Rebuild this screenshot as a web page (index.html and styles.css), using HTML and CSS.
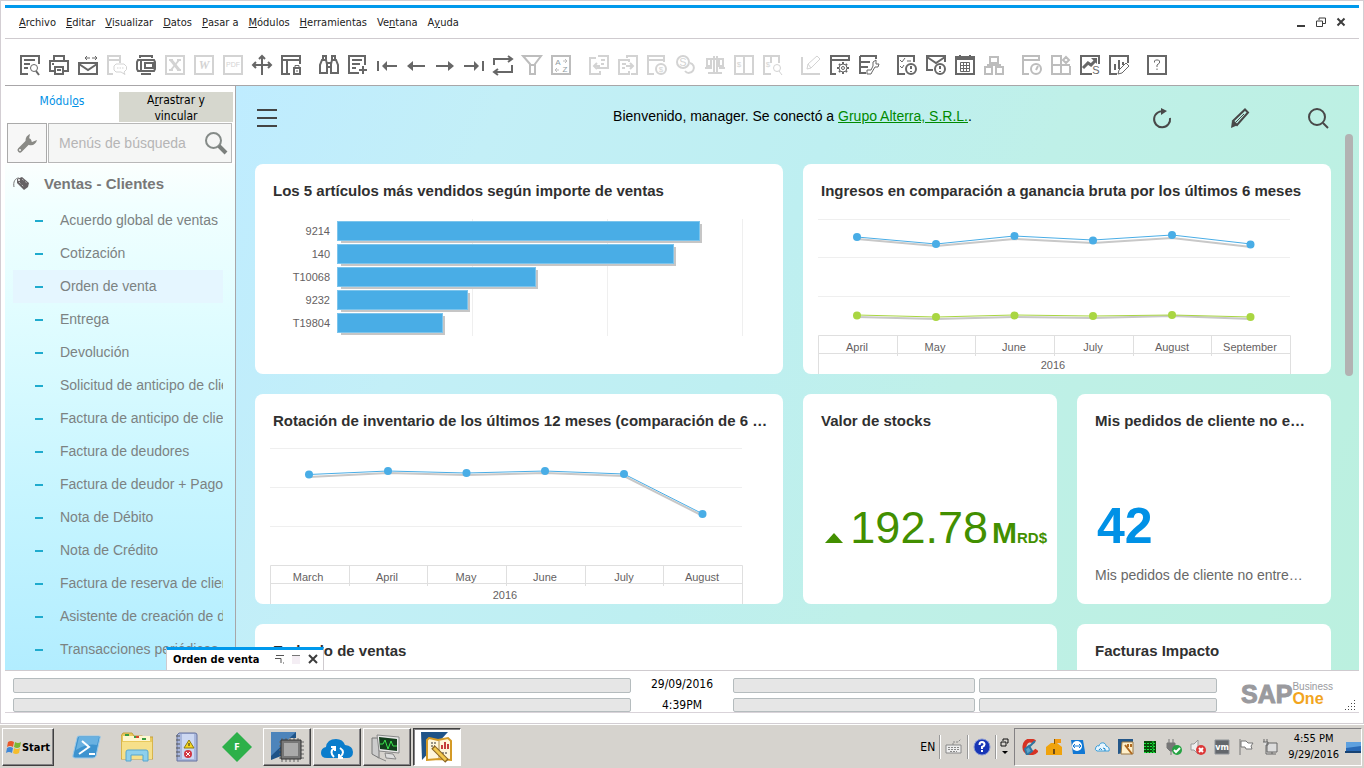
FILE: index.html
```html
<!DOCTYPE html>
<html lang="es">
<head>
<meta charset="utf-8">
<title>SAP Business One</title>
<link rel="stylesheet" href="styles.css">
</head>
<body>
<div class="window">
  <div class="frame">
  <header class="menubar">
    <nav class="menus">
      <button><u>A</u>rchivo</button><button><u>E</u>ditar</button><button><u>V</u>isualizar</button><button><u>D</u>atos</button><button><u>P</u>asar a</button><button><u>M</u>ódulos</button><button><u>H</u>erramientas</button><button>Ve<u>n</u>tana</button><button>A<u>y</u>uda</button>
    </nav>
    <div class="wincontrols">
      <button aria-label="Minimizar"><svg width="10" height="10"><path class="wc" d="M1 9h8"/></svg></button>
      <button aria-label="Restaurar"><svg width="10" height="10"><path class="wc thin" d="M.5 4h6v5.500h-6zM3 3V1h6.500v5.500H7"/></svg></button>
      <button aria-label="Cerrar"><svg width="10" height="10"><path class="wc" d="M1.500 1.500l7 7M8.500 1.500l-7 7"/></svg></button>
    </div>
  </header>

  <div class="toolbar">
    <div class="group">
      <button aria-label="Vista previa"><svg class="ico" viewBox="0 0 20 20"><path d="M8 19H1V1h18v8M4 5h11M4 9h6M4 13h4"/><circle cx="14" cy="13" r="3.500" class="t"/><path d="M16 16l3 4"/></svg></button>
      <button aria-label="Imprimir"><svg class="ico" viewBox="0 0 20 20"><path d="M5 6V1h10v5M5 16H1V6h18v10h-4M6 12h8v7H6zM8 15h4M3 9h2"/></svg></button>
      <button aria-label="Correo"><svg class="ico" viewBox="0 0 20 20"><path d="M1 8h18v11H1zM1 9l9 6 9-6"/><path class="t" d="M7 3h5M14 3h5M9 1L7 3l2 2M17 1l2 2-2 2"/></svg></button>
      <button aria-label="SMS" disabled><svg class="ico" viewBox="0 0 20 20"><path d="M6 19H1V1h12v7M1 5h12"/><path class="t" d="M9 9h8l2.500 2.500v3L17 17l1 2.500-4-2.500H9l-2-2v-4zM10 13h1.500M12.500 13H14M15 13h1.500"/></svg></button>
      <button aria-label="Fax"><svg class="ico" viewBox="0 0 20 20"><path d="M4 3V1h12v2M2 5h16l1 2v7l-1 2H2l-1-2V7zM5 5v11M9 8h8v5H9zM5 19h10"/></svg></button>
      <button aria-label="Excel" disabled><svg class="ico" viewBox="0 0 20 20"><path d="M1 1h18v18H1z"/><path class="x" d="M6 5l8 10"/><path d="M14 5L6 15M4 5h4M12 5h4M4 15h4M12 15h4"/></svg></button>
      <button aria-label="Word" disabled><svg class="ico" viewBox="0 0 20 20"><path d="M1 1h18v18H1z"/><text x="10" y="14" class="serif">W</text></svg></button>
      <button aria-label="PDF" disabled><svg class="ico" viewBox="0 0 20 20"><path d="M1 1h18v18H1z"/><text x="10" y="12" class="pdf">PDF</text></svg></button>
      <button aria-label="Mover"><svg class="ico" viewBox="0 0 20 20"><path d="M10 2v18M2 10h16M7 4l3-3 3 3M4 7l-3 3 3 3M16 7l3 3-3 3"/></svg></button>
      <button aria-label="Bloquear"><svg class="ico" viewBox="0 0 20 20"><path d="M9 19H1V1h18v8M1 5h18M6 5v14"/><path d="M13 13h6v6h-6z"/><path class="t" d="M14 12v-1.500h4V12M16 15v2"/></svg></button>
    </div>
    <div class="group">
      <button aria-label="Buscar"><svg class="ico" viewBox="0 0 20 20"><path d="M4 5V1h3v4M13 5V1h3v4M3 5h4l1 4v9H1v-8zM13 5h4l2 5v8h-7V9zM8 8h4M8 12h4"/></svg></button>
      <button aria-label="Crear"><svg class="ico" viewBox="0 0 20 20"><path d="M11 18H1V1h16v9M4 5h10M4 9h8M4 13h4M15 11v8M11 15h8"/></svg></button>
      <button aria-label="Primero"><svg class="ico" viewBox="0 0 20 20"><path d="M1 6v10M6 11h14"/><path class="f" d="M5 11l5-5v10z"/></svg></button>
      <button aria-label="Anterior"><svg class="ico" viewBox="0 0 20 20"><path d="M3 11h16"/><path class="f" d="M1 11l6-5v10z"/></svg></button>
      <button aria-label="Siguiente"><svg class="ico" viewBox="0 0 20 20"><path d="M1 11h16"/><path class="f" d="M19 11l-6-5v10z"/></svg></button>
      <button aria-label="Último"><svg class="ico" viewBox="0 0 20 20"><path d="M19 6v10M0 11h14"/><path class="f" d="M15 11l-5-5v10z"/></svg></button>
      <button aria-label="Actualizar"><svg class="ico" viewBox="0 0 20 20"><path d="M1 10V4h17M19 10v7H2M15 1l4 3-4 3M5 14l-4 3 4 3"/></svg></button>
      <button aria-label="Filtrar"><svg class="ico mid" viewBox="0 0 20 20"><path d="M1 1h18l-6 8v10H8V9zM8 10h5"/></svg></button>
      <button aria-label="Ordenar"><svg class="ico mid" viewBox="0 0 20 20"><path d="M1 1h18v18H1z"/><path class="t" d="M12 6h4l-2-2M16 6l-2 2M8 15H4l2-2M4 15l2 2"/><text x="7" y="10" class="tiny">A</text><text x="14" y="17" class="tiny">Z</text></svg></button>
    </div>
    <div class="group">
      <button aria-label="Documento base" disabled><svg class="ico" viewBox="0 0 20 20"><path d="M7 3H1v16h10v-3M9 1h10v12H9v-3M12 5h4M12 9h3M5 11h6M8 8l-3 3 3 3"/></svg></button>
      <button aria-label="Documento destino" disabled><svg class="ico" viewBox="0 0 20 20"><path d="M9 3V1h10v18h-6M11 7V5H1v14h10v-3M4 9h4M4 13h3M8 11h7M12 8l3 3-3 3"/></svg></button>
      <button aria-label="Ganancia bruta" disabled><svg class="ico" viewBox="0 0 20 20"><path d="M7 19H1V1h16v6M1 5h16"/><circle cx="14" cy="14" r="5"/><text x="14" y="17" class="tiny">$</text></svg></button>
      <button aria-label="Medios de pago" disabled><svg class="ico" viewBox="0 0 20 20"><circle cx="7" cy="7" r="6"/><path d="M14 8a5 5 0 1 1-5 8"/><text x="7" y="11" class="small">S</text></svg></button>
      <button aria-label="Balance" disabled><svg class="ico" viewBox="0 0 20 20"><path d="M1 4h18M9 1v17M12 1v17M2 5v6h4V5M14 5v6h4V5M0 13h7M14 13h6M3 18h14"/></svg></button>
      <button aria-label="Asiento" disabled><svg class="ico" viewBox="0 0 20 20"><path d="M1 1h18v18H1zM10 1v18"/><text x="5" y="12" class="tiny">$</text></svg></button>
      <button aria-label="Detalle" disabled><svg class="ico" viewBox="0 0 20 20"><path d="M8 19H1V1h15v7M8 1v7"/><text x="5" y="12" class="tiny">$</text><circle class="t" cx="14" cy="13" r="3.500"/><path class="t" d="M16 16l3 4"/></svg></button>
    </div>
    <div class="group">
      <button aria-label="Diseño" disabled><svg class="ico" viewBox="0 0 20 20"><path d="M1 2v17h18"/><path class="t" d="M6 14l1-5 9-8 3 3-9 9zM7 9l3 4"/></svg></button>
      <button aria-label="Parametrizaciones"><svg class="ico" viewBox="0 0 20 20"><path d="M6 19H1V1h18v5M1 5h18"/><circle class="t" cx="13" cy="13" r="4"/><circle class="t" cx="13" cy="13" r="1.500"/><path d="M13 7v2M13 17v2M7 13h2M17 13h2M9 9l1 1M16 16l1 1M9 17l1-1M16 10l1-1"/></svg></button>
      <button aria-label="Herramientas"><svg class="ico" viewBox="0 0 20 20"><path d="M1 1h16v3M1 1v17h6M1 7h10M1 12h8"/><path class="t" d="M8 19v-4h4l2-4V7l3-2v4h3l-1 3h-3l-3 5-1 2z"/></svg></button>
    </div>
    <div class="group">
      <button aria-label="Actividades"><svg class="ico" viewBox="0 0 20 20"><path d="M8 19H1V1h16v6"/><path class="t" d="M3 5l2 2 3-4M3 11l2 2 2-3M10 6h4"/><circle cx="14" cy="14" r="5"/><path d="M14 11v3M14 16v1"/></svg></button>
      <button aria-label="Mensajes"><svg class="ico" viewBox="0 0 20 20"><path d="M7 15H1V1h18v6M1 2l9 6 9-6"/><circle cx="14" cy="14" r="5"/><path d="M14 11v3M14 16v1"/></svg></button>
      <button aria-label="Calendario"><svg class="ico" viewBox="0 0 20 20"><path d="M1 2h18v17H1zM1 4h18M5 0v4M15 0v4"/><path class="t" d="M5.500 7.500h9v9h-9zM8.500 8v8M11.500 8v8M5 10.500h10M5 13.500h10"/></svg></button>
      <button aria-label="Relaciones"><svg class="ico mid" viewBox="0 0 20 20"><path d="M6 2h8v6H6zM1 12h7v7H1zM12 12h7v7h-7zM10 8v3M4 12v-2h12v2"/></svg></button>
    </div>
    <div class="group">
      <button aria-label="Panel"><svg class="ico mid" viewBox="0 0 20 20"><path d="M7 19H1V1h16v5M1 5h16"/><circle cx="14" cy="14" r="5"/><path d="M14 15l2-4"/></svg></button>
      <button aria-label="Widgets"><svg class="ico mid" viewBox="0 0 20 20"><path d="M11 1H1v18h18v-8M10 1v18M1 10h18M15 2l3 3-3 3-3-3z"/></svg></button>
      <button aria-label="Ventas"><svg class="ico" viewBox="0 0 20 20"><path d="M12 19H1V1h18v8"/><path class="x" d="M3 13l5-5 3 2 4-4"/><path class="f" d="M11 3h6v6z"/><text x="16" y="19" class="small">S</text></svg></button>
      <button aria-label="Informes"><svg class="ico" viewBox="0 0 20 20"><path d="M8 19H1V1h18v7M6 9v6M10 5v9M14 7v3"/><path class="t" d="M9 19l1-4 7-7 3 3-7 7z"/></svg></button>
    </div>
    <div class="group">
      <button aria-label="Ayuda"><svg class="ico" viewBox="0 0 20 20"><path d="M1 1h18v18H1z"/><path class="t" d="M7.500 7.500V6l1-1h3l1 1v2L10 10v2M10 13.500V15"/></svg></button>
    </div>
  </div>

  <div class="workspace">
    <aside class="sidebar">
      <div class="tabs"><button class="tab on">Módul<u>o</u>s</button><button class="tab">A<u>r</u>rastrar y vincular</button></div>
      <div class="searchrow">
        <button class="wrench" aria-label="Configurar"><svg width="24" height="24"><path d="M5 19L14 10" stroke="#8a8a86" stroke-width="5" stroke-linecap="round"/><path d="M11 11c-1-3 0-6 4-8l-1 5 3 3 5-2c-1 4-4 6-8 5z" fill="#8a8a86"/><circle cx="5" cy="19" r="1" fill="#f7f7f7"/></svg></button>
        <label class="search"><input type="text" placeholder="Menús de búsqueda" aria-label="Menús de búsqueda"><svg width="24" height="24"><circle cx="9.500" cy="9.500" r="7.500" fill="none" stroke="#858b88" stroke-width="2"/><path d="M15 15l7 7" stroke="#7b7f7c" stroke-width="4"/></svg></label>
      </div>
      <div class="tree">
        <h2><svg width="16" height="16"><path d="M1 12c-1-5 1-9 5-9" stroke="#777" fill="none"/><path d="M4 4l5-2 7 6-1 4-4 3-7-7z" fill="#666264"/><path d="M6 7l5 5M9 4l5 4" stroke="#b9b9b9" stroke-dasharray="2 2"/><circle cx="6" cy="5" r="1" fill="#fff"/></svg>Ventas - Clientes</h2>
        <ul>
          <li><a href="#">Acuerdo global de ventas</a></li>
          <li><a href="#">Cotización</a></li>
          <li class="active"><a href="#">Orden de venta</a></li>
          <li><a href="#">Entrega</a></li>
          <li><a href="#">Devolución</a></li>
          <li><a href="#">Solicitud de anticipo de clientes</a></li>
          <li><a href="#">Factura de anticipo de clientes</a></li>
          <li><a href="#">Factura de deudores</a></li>
          <li><a href="#">Factura de deudor + Pago</a></li>
          <li><a href="#">Nota de Débito</a></li>
          <li><a href="#">Nota de Crédito</a></li>
          <li><a href="#">Factura de reserva de clientes</a></li>
          <li><a href="#">Asistente de creación de documentos</a></li>
          <li><a href="#">Transacciones periódicas</a></li>
        </ul>
      </div>
    </aside>

    <main class="cockpit">
      <div class="cockhead">
        <button aria-label="Menú"><svg width="22" height="20"><path d="M1 2h20M1 10h20M1 18h20" stroke="#444" stroke-width="2"/></svg></button>
        <p>Bienvenido, manager. Se conectó a <a href="#">Grupo Alterra, S.R.L.</a>.</p>
        <div class="tools">
          <button aria-label="Actualizar"><svg width="22" height="22"><path d="M13 4.500A8 8 0 1 0 19 11" fill="none" stroke="#484848" stroke-width="2"/><path d="M10 1l6 3-6 4z" fill="#484848"/></svg></button>
          <button aria-label="Editar"><svg width="22" height="22"><path d="M4 14L16 2.500l3 3L8 18z" fill="none" stroke="#484848" stroke-width="2"/><path d="M7 15l8-8" stroke="#484848"/><path d="M2 21l1-7 6 4z" fill="#484848"/></svg></button>
          <button aria-label="Buscar"><svg width="22" height="22"><circle cx="10" cy="10" r="8" fill="none" stroke="#484848" stroke-width="2"/><path d="M16 16l5 5" stroke="#484848" stroke-width="2"/></svg></button>
        </div>
      </div>
      <div class="cards">
        <section class="card wide">
          <h3>Los 5 artículos más vendidos según importe de ventas</h3>
          <svg class="chart" viewBox="0 0 528 164">
            <path class="grid" d="M217.500 9v117M352.500 9v117M487.500 9v117"/>
            <g class="shade"><rect x="86" y="14" width="361" height="19"/><rect x="86" y="37" width="335" height="19"/><rect x="86" y="60" width="197" height="19"/><rect x="86" y="83" width="129" height="19"/><rect x="86" y="106" width="104" height="19"/></g>
            <g class="bar"><rect x="82.500" y="11.500" width="362" height="19"/><rect x="82.500" y="34.500" width="336" height="19"/><rect x="82.500" y="57.500" width="198" height="19"/><rect x="82.500" y="80.500" width="130" height="19"/><rect x="82.500" y="103.500" width="105" height="19"/></g>
            <g class="end"><text x="75" y="25">9214</text><text x="75" y="48">140</text><text x="75" y="71">T10068</text><text x="75" y="94">9232</text><text x="75" y="117">T19804</text></g>
          </svg>
        </section>
        <section class="card wide">
          <h3>Ingresos en comparación a ganancia bruta por los últimos 6 meses</h3>
          <svg class="chart" viewBox="0 0 528 164">
            <path class="grid" d="M15 9.500h472M15 47.500h472M15 86.500h472"/>
            <path class="axis" d="M15.500 164V125.500h472V164M15.500 143.500h472M94.500 125v21M172.500 125v21M251.500 125v21M330.500 125v21M408.500 125v21"/>
            <path class="lshade" d="M54 29l79 7 78-7 79 4 79-5 79 9M54 107l79 2 78-2 79 1 79-2 79 3"/>
            <path class="lblue" d="M54 27l79 7 78-8 79 4 79-5 79 9"/><path class="lgreen" d="M54 105l79 2 78-2 79 1 79-1 79 2"/>
            <g class="dblue"><circle cx="54" cy="27" r="4"/><circle cx="133" cy="34" r="4"/><circle cx="211.500" cy="26" r="4"/><circle cx="290" cy="30.500" r="4"/><circle cx="369" cy="25" r="4"/><circle cx="447.500" cy="34.500" r="4"/></g>
            <g class="dgreen"><circle cx="54" cy="105.500" r="4"/><circle cx="133" cy="107" r="4"/><circle cx="211.500" cy="105.500" r="4"/><circle cx="290" cy="106" r="4"/><circle cx="369" cy="105" r="4"/><circle cx="447.500" cy="107" r="4"/></g>
            <g class="center"><text x="54" y="141">April</text><text x="132" y="141">May</text><text x="211" y="141">June</text><text x="290" y="141">July</text><text x="369" y="141">August</text><text x="447" y="141">September</text><text x="250" y="159">2016</text></g>
          </svg>
        </section>
        <section class="card wide">
          <h3>Rotación de inventario de los últimos 12 meses (comparación de 6 …</h3>
          <svg class="chart" viewBox="0 0 528 164">
            <path class="grid" d="M15 8.500h472M15 47.500h472M15 86.500h472"/>
            <path class="axis" d="M15.500 164V125.500h472V164M15.500 143.500h472M94.500 125v21M172.500 125v21M251.500 125v21M330.500 125v21M408.500 125v21"/>
            <path class="lshade" d="M54 37l79-4 78 2 79-2 79 3 79 40"/>
            <path class="lblue" d="M54 34.500l79-3.500 78 2 79-2 79 3 79 40"/>
            <g class="dblue"><circle cx="54" cy="34.500" r="4"/><circle cx="133" cy="31" r="4"/><circle cx="211.500" cy="33" r="4"/><circle cx="290" cy="31" r="4"/><circle cx="369" cy="34" r="4"/><circle cx="447.500" cy="74" r="4"/></g>
            <g class="center"><text x="53" y="141">March</text><text x="132" y="141">April</text><text x="211" y="141">May</text><text x="290" y="141">June</text><text x="369" y="141">July</text><text x="447" y="141">August</text><text x="250" y="159">2016</text></g>
          </svg>
        </section>
        <section class="card">
          <h3>Valor de stocks</h3>
          <div class="kpi"><svg width="18" height="10"><path d="M0 10L9 0l9 10z" fill="#428f00"/></svg><span class="num">192.78</span><span class="unit">M</span><span class="cur">RD$</span></div>
        </section>
        <section class="card">
          <h3>Mis pedidos de cliente no e…</h3>
          <div class="count">42</div>
          <p class="note">Mis pedidos de cliente no entre…</p>
        </section>
        <section class="card three"><h3>Embudo de ventas</h3></section>
        <section class="card"><h3>Facturas Impacto</h3></section>
      </div>
      <div class="scroll"></div>
    </main>
    <div class="mini"><strong>Orden de venta</strong>
      <button aria-label="Restaurar"><svg width="10" height="10"><path d="M2 1.500h8M1 4.500h6V9M9 9h1" fill="none" stroke="#555"/></svg></button>
      <button aria-label="Maximizar"><svg width="10" height="10"><path fill="#f4eef4" d="M1 2h8v8H1z"/><path d="M1 1.500h8" stroke="#777"/></svg></button>
      <button aria-label="Cerrar"><svg width="10" height="10"><path class="wc" d="M1 1l8 8M9 1L1 9"/></svg></button>
    </div>
  </div>

  <footer class="status">
    <div class="col grow"><span class="field"></span><span class="field"></span></div>
    <div class="col date"><span>29/09/2016</span><span>4:39PM</span></div>
    <div class="col mid1"><span class="field"></span><span class="field"></span></div>
    <div class="col mid2"><span class="field"></span><span class="field"></span></div>
    <div class="brand"><b>SAP</b><span class="bo"><span>Business</span><strong>One</strong></span></div>
    <svg class="grip" width="12" height="12"><path d="M10.500 0v12M7.500 3v9M4.500 6v6M1.500 9v3" stroke="#444" stroke-dasharray="1 2"/></svg>
  </footer>
  </div>
</div>

<div class="taskbar">
  <button class="start"><svg width="16" height="16"><path d="M2 3q3-2 6 0L7 8Q4 6 1 8z" fill="#e8582a"/><path d="M9 3q3 2 6 0l-1 5q-3 2-6 0z" fill="#7bb733"/><path d="M1 9q3-2 6 0l-1 5q-3-2-6 0z" fill="#3f87d6"/><path d="M8 9q3 2 6 0l-1 5q-3 2-6 0z" fill="#f5bd2c"/></svg>Start</button>
  <div class="quick">
    <button aria-label="PowerShell"><svg width="32" height="32"><path d="M8 5h20q2 0 1 2l-4 18q-1 2-3 2H4q-3 0-2-3L6 7q0-2 2-2z" fill="#3d93cf" stroke="#9cc9e8"/><path d="M8 6h20l-2 8q-9-2-21 5z" fill="#7cbde8" opacity=".7"/><path d="M11 10l7 6-10 7M18 23h6" fill="none" stroke="#fff" stroke-width="2"/></svg></button>
    <button aria-label="Explorador"><svg width="32" height="32"><path d="M0 5l2-3h9l2 3h8l2 1h9v22H0z" fill="#e9c95c" stroke="#c6a13c"/><path d="M2 5h27v5H2z" fill="#fff6cf"/><path d="M4 4h4M13 6h4M21 8h4" stroke="#3a9b42" stroke-width="2"/><path d="M15 6h3" stroke="#d6452c" stroke-width="2"/><path d="M1 11h30v17H1z" fill="#f6e08a"/><path d="M5 30V21q0-2 2-2h18q2 0 2 2v9h-5v-6H10v6z" fill="#8ed0ec" stroke="#57a6cf"/></svg></button>
    <button aria-label="Visor"><svg width="32" height="32"><path d="M8 2h16q2 0 2 2v26H6V4z" fill="#a9b7dd" stroke="#66739f"/><path d="M11 3h12v25H11z" fill="#cdd8f2"/><path d="M5 5h4M5 9h4M5 13h4M5 17h4M5 21h4M5 25h4" stroke="#555"/><path d="M18 9l5 8H13z" fill="#f8d71e" stroke="#8c7b12"/><path d="M18 12v3" stroke="#222"/><circle cx="17" cy="23" r="4" fill="#d23643"/><path d="M15 21l4 4M19 21l-4 4" stroke="#fff"/></svg></button>
    <button aria-label="F"><svg width="32" height="32"><path d="M16 1l15 15-15 15L1 16z" fill="#2db04a"/><text x="16" y="19" class="ftext">F</text></svg></button>
  </div>
  <div class="tasks">
    <button aria-label="Servidor"><svg width="36" height="34"><path d="M2 2h25v6H12v18L2 30z" fill="#1f5387"/><path d="M2 2h25L2 26z" fill="#4d84bb"/><path d="M13 8v24M17 8v24M21 8v24M25 8v24M29 8v24M10 12h25M10 16h25M10 20h25M10 24h25M10 28h25" stroke="#666"/><path d="M12 10h20v19H12z" fill="#777" stroke="#333"/><path d="M15 13h14v13H15z" fill="#aaa"/></svg></button>
    <button aria-label="Nube"><svg width="36" height="34"><path d="M8 28Q2 28 2 23q0-5 5-6 1-8 10-8 7 0 9 6 8 1 8 7 0 6-6 6z" fill="#0a7dcc"/><path d="M15 27q-5-5 0-9M12 17h4v4M21 18q6 4 0 9M24 28h-4v-4" fill="none" stroke="#fff" stroke-width="2"/></svg></button>
    <button aria-label="Monitor"><svg width="36" height="34"><path d="M3 8h7v20l-7-4z" fill="#ccc" stroke="#777"/><path d="M8 5l22 2v16L10 21z" fill="#e8e8e8" stroke="#888"/><path d="M10 7l18 2v12l-17-2z" fill="#113d1b"/><path d="M11 14h3l2-4 3 9 3-8 2 5h4" fill="none" stroke="#39e34b"/><path d="M16 23l8 1 3 5-10-1zM8 27l9 4" fill="#ddd" stroke="#888"/></svg></button>
    <button class="pressed" aria-label="SAP Business One"><svg width="36" height="34"><path d="M2 2h27L3 30z" fill="#1f5387"/><path d="M10 8l9 2 10-2 3 3v19l-12-1-12 1V10z" fill="#fff6db" stroke="#d49a26" stroke-width="2"/><path d="M20 11v17" stroke="#ad8c4b"/><path d="M23 19v-4M26 19v-7M29 19v-5" stroke="#c53d3d" stroke-width="2"/><path d="M12 13h5M12 16h4M23 23h6" stroke="#333" stroke-dasharray="2 1"/><path d="M14 17l14 14" stroke="#8a6420" stroke-width="5"/><path d="M15 18l12 12" stroke="#f2c84e" stroke-width="3"/></svg></button>
  </div>
  <div class="lang"><span>EN</span>
    <span class="cell"><svg width="18" height="18"><path d="M1 7h15v8H1z" fill="#eee" stroke="#888"/><path d="M3 9.500h11M3 11.500h11M5 13.500h7M8 7V4h5l3-3" stroke="#888" fill="none" stroke-dasharray="2 1"/></svg></span>
    <span class="cell"><svg width="18" height="18"><circle cx="9" cy="9" r="8" fill="#1735b5" stroke="#8798d5"/><path d="M6.500 7q0-3 2.500-3t2.500 2.500Q11.500 8 9 9v2M9 12v2" fill="none" stroke="#fff" stroke-width="2"/></svg></span>
    <span class="cell last"><svg width="10" height="18"><path d="M1 4h5v4H1zM3 3V1h5v4H7" fill="none" stroke="#111"/><path d="M2 13h6l-3 3z"/></svg></span>
  </div>
  <div class="tray">
    <svg width="16" height="16"><path d="M13 3Q6-1 3 5q-2 7 4 9 5 1 8-3" fill="none" stroke="#d63324" stroke-width="4"/><path d="M13 2L7 8M3 10l4-3 3 5-5 4z" stroke="#2f77a3" stroke-width="2" fill="#58a4cc"/></svg>
    <svg width="16" height="16"><path d="M0 8l5-4h6l5 4v8H0z" fill="#f0a30c"/><path d="M8.500 0v5" stroke="#8a5a00"/><path d="M9 0h6v4H9z" fill="#f39b13"/><path d="M7 10h2v5H7z" fill="#6d4b16"/></svg>
    <svg width="16" height="16"><path d="M1 1h12l2 12v2H3z" fill="#1178d4"/><circle cx="7" cy="7" r="5" fill="#fff"/><path d="M4 7h6M5 5L3 7l2 2M9 5l2 2-2 2" fill="none" stroke="#1178d4"/></svg>
    <svg width="16" height="16"><path d="M3 12q-3-1-1-4 1-2 3-1 1-4 5-3 2 1 2 3 4 1 3 5z" fill="#e6f5ff" stroke="#3a9ed9"/><path d="M5 11q1-3 3 0M9 9q3 0 2 3" fill="none" stroke="#1584cb"/></svg>
    <svg width="16" height="16"><path d="M0 0h15v12L0 15z" fill="#245789"/><path d="M4 3h11v12H3z" fill="#fff0ca" stroke="#9b7943"/><path d="M7 6l7 9M10 5v3M13 5v3" stroke="#b06920" stroke-width="2"/></svg>
    <svg width="16" height="16"><path d="M2 2h12v12H2z" fill="#084b08"/><path d="M2 4.500h12M2 7.500h12M2 10.500h12M2 13.500h12M11 2v12" stroke="#18e33f" stroke-dasharray="2 1"/></svg>
    <svg width="16" height="16"><path d="M3 0v4M7 0v4M1 4h8v5l-3 3H4L1 9zM5 12v4" fill="#777" stroke="#777"/><circle cx="11" cy="11" r="5" fill="#26a343"/><path d="M8 11l2 2 4-4" stroke="#fff" stroke-width="2" fill="none"/></svg>
    <svg width="16" height="16"><path d="M1 5h3l4-4v14l-4-4H1z" fill="#eee" stroke="#999"/><circle cx="11" cy="11" r="5" fill="#dc3838"/><path d="M9 9l4 4M13 9l-4 4" stroke="#fff" stroke-width="2"/></svg>
    <svg width="16" height="16"><path d="M1 1h14v14H1z" fill="#63676c" stroke="#909499"/><text x="8" y="11" class="vm">vm</text></svg>
    <svg width="16" height="16"><path d="M2 0v16M3 2h5l2 2h5l-2 3 1 3H8L7 8H3z" fill="#fff" stroke="#777"/></svg>
    <svg width="16" height="16"><path d="M5 4h10v9H5zM7 15h7M10 13v2M2 0v3M5 0v3M1 3h5v3H4v9h3" fill="#ddd" stroke="#666"/></svg>
    <div class="clock"><span>4:55 PM</span><span>9/29/2016</span></div>
    <svg class="desk" width="16" height="16"><path d="M1 3h15v10H1z" fill="#2869b6"/><path d="M1 3h15v4L1 9z" fill="#5da0df"/><path d="M0 13h16" stroke="#174273" stroke-width="2"/></svg>
  </div>
</div>
</body>
</html>
```
FILE: styles.css
```css
* { box-sizing: border-box; }
body {
  margin: 0;
  height: 100vh;
  display: flex;
  flex-direction: column;
  overflow: hidden;
  font-family: "Liberation Sans", Arial, sans-serif;
  font-size: 14px;
  color: #000;
  background: #d6d3ce;
}
button { margin: 0; padding: 0; border: 0; background: none; font: inherit; color: inherit; display: flex; align-items: center; justify-content: center; }
svg { display: block; flex: none; }
h2, h3, p, ul { margin: 0; padding: 0; }
ul { list-style: none; }

.window { flex: 1; min-height: 0; display: flex; border: 1px solid #d3ced3; background: #fff; padding: 4px 4px 10px; }
.frame { flex: 1; min-width: 0; display: flex; flex-direction: column; border-top: 3px solid #0099ec; }

.menubar { height: 31px; flex: none; display: flex; align-items: center; justify-content: space-between; padding: 0 13px 2px 14px; border-bottom: 1px solid #cfcbcf; font-family: "DejaVu Sans Condensed", "DejaVu Sans", sans-serif; font-size: 11px; color: #222; }
.menus { display: flex; gap: 10px; }
.wincontrols { display: flex; gap: 10px; }
.wc { stroke: #3c3c3c; stroke-width: 2; fill: none; }
.wc.thin { stroke-width: 1; }

.toolbar { height: 47px; flex: none; display: flex; gap: 18px; padding: 6px 15px 0; align-items: center; border-bottom: 1px solid #a8a6a8; }
.group { display: flex; gap: 9px; }
.ico { width: 20px; height: 20px; fill: none; stroke: #676767; stroke-width: 2; color: #676767; overflow: visible; }
.toolbar button:disabled .ico { stroke: #d3d3d3; color: #d3d3d3; }
.ico.mid { stroke: #bdbdbd; color: #8f9b9f; }
.ico .t { stroke-width: 1; }
.ico .x { stroke-width: 3; }
.ico .f { fill: currentColor; stroke: none; }
.ico text { fill: currentColor; stroke: none; text-anchor: middle; }
.tiny { font-size: 8px; }
.pdf { font-size: 7px; }
.small { font-size: 11px; }
.serif { font: italic bold 12px "Liberation Serif", serif; }

.workspace { flex: 1; min-height: 0; display: flex; position: relative; border-bottom: 1px solid #cfcbcf; }
.sidebar { width: 231px; flex: none; display: flex; flex-direction: column; border-right: 1px solid #a8a6a8; overflow: hidden; }
.tabs { height: 37px; flex: none; display: flex; align-items: flex-start; padding: 6px 2px 0 0; font-family: "DejaVu Sans Condensed", "DejaVu Sans", sans-serif; font-size: 12px; line-height: 16px; }
.tab { flex: 1; display: block; height: 30px; padding: 0 20px; background: #d6d7ce; }
.tab.on { height: auto; padding-top: 1px; background: none; color: #0091e6; }
.searchrow { display: flex; gap: 1px; height: 41px; flex: none; padding: 0 3px 1px 2px; }
.wrench { width: 40px; flex: none; border: 1px solid #aaa; background: #f7f7f7; }
.search { flex: 1; min-width: 0; display: flex; align-items: center; border: 1px solid #b8b8b8; background: #f5f6f5; padding: 0 3px 0 9px; }
.search input { flex: 1; width: 0; border: 0; outline: 0; padding: 0 1px; background: none; font: 14px "Liberation Sans", Arial, sans-serif; }
.search input::placeholder { color: #b5b5b5; }
.tree { flex: 1; min-height: 0; padding: 0 12px 0 8px; background: linear-gradient(#fbfffe 0, #f1ffff 8%, #e2fdff 28%, #c7f5ff 65%, #b2edff); color: #787878; overflow: hidden; }
.tree h2 { display: flex; align-items: center; gap: 15px; height: 40px; padding: 0 0 2px; font-size: 15px; }
.tree li { height: 33px; line-height: 33px; padding-left: 22px; font-size: 14px; }
.tree li.active { background: #e5f6ff; }
.tree a { display: flex; gap: 17px; align-items: center; color: #7c8282; text-decoration: none; white-space: nowrap; overflow: hidden; }
.tree a::before { content: ""; width: 8px; height: 2px; flex: none; background: #1fabce; }

.cockpit { flex: 1; min-width: 0; position: relative; overflow: hidden; background: linear-gradient(112deg, #bfecff 0, #c3eff7 20%, #beeff1 45%, #bff0e8 62%, #bbf0df); }
.cockhead { display: grid; grid-template-columns: 1fr auto 1fr; align-items: center; height: 78px; padding: 0 30px 14px 20px; }
.cockhead p { line-height: 20px; padding-bottom: 4px; }
.cockhead p a { color: #008a00; }
.cockhead button { justify-self: start; }
.tools { display: flex; gap: 56px; justify-self: end; }
.cards { display: grid; grid-template-columns: repeat(4, 1fr); grid-auto-rows: 210px; gap: 20px; padding: 0 28px 0 19px; }
.card { min-width: 0; background: #fff; border-radius: 8px; overflow: hidden; display: flex; flex-direction: column; }
.wide { grid-column: span 2; }
.three { grid-column: span 3; }
.card h3 { height: 46px; flex: none; padding: 17px 8px 0 18px; font-size: 15px; line-height: 20px; color: #303030; white-space: nowrap; overflow: hidden; }
.chart { width: 100%; font-size: 11px; fill: #655f62; }
.chart .grid { stroke: #efefef; }
.chart .axis { stroke: #dfdfdf; fill: none; }
.shade { fill: #c6c6c6; }
.bar { fill: #49ade6; stroke: #7cc4ec; }
.end { text-anchor: end; }
.center { text-anchor: middle; }
.lshade { fill: none; stroke: #c8c8c8; stroke-width: 2; }
.lblue { fill: none; stroke: #49ade6; stroke-width: 1; }
.lgreen { fill: none; stroke: #a9d642; stroke-width: 1; }
.dblue { fill: #49ade6; }
.dgreen { fill: #a9d642; }
.kpi { display: flex; align-items: baseline; justify-content: flex-end; color: #428f00; padding: 60px 10px 0 0; line-height: 56px; }
.num { font-size: 45px; margin: 0 4px 0 7px; }
.unit { font-size: 30px; font-weight: bold; }
.cur { font-size: 15px; font-weight: bold; }
.count { font-size: 50px; font-weight: bold; color: #0091e6; line-height: 56px; padding: 58px 20px 0; }
.note { padding: 11px 18px 0; line-height: 20px; color: #686868; white-space: nowrap; }
.scroll { position: absolute; right: 6px; top: 48px; width: 8px; height: 242px; border-radius: 4px; background: #b2b2b2; }

.mini { position: absolute; left: 161px; bottom: 0; width: 158px; height: 23px; display: flex; align-items: center; gap: 7px; padding: 0 5px 2px 6px; background: #fff; border: 1px solid #cfcbcf; border-bottom: 0; border-top: 3px solid #0099ec; font-family: "DejaVu Sans Condensed", "DejaVu Sans", sans-serif; font-size: 11px; }
.mini strong { flex: 1; white-space: nowrap; }

.status { position: relative; height: 42px; flex: none; display: flex; padding: 0 8px; border-bottom: 1px solid #d9d3d9; }
.col { display: flex; flex-direction: column; gap: 5px; padding-top: 7px; }
.field { height: 15px; border: 1px solid #b5bcbe; border-radius: 2px; background: #e6e6e6; }
.grow { flex: 1; }
.date { width: 102px; gap: 5px; padding-top: 5px; line-height: 16px; text-align: center; font-family: "DejaVu Sans Condensed", "DejaVu Sans", sans-serif; font-size: 12px; }
.mid1 { width: 242px; margin-right: 4px; }
.mid2 { width: 238px; }
.brand { width: 134px; display: flex; align-items: center; padding: 4px 0 0 24px; color: #9a9a9e; }
.brand b { font-size: 25px; line-height: 24px; -webkit-text-stroke: 1px #9a9a9e; }
.bo { display: flex; flex-direction: column; font-size: 10px; line-height: 10px; }
.bo strong { font-size: 16px; line-height: 14px; color: #f2a51e; }
.grip { position: absolute; right: 3px; bottom: 0; }

.taskbar { height: 44px; flex: none; display: flex; align-items: center; background: #d6d3ce; border-top: 1px solid #fff; padding: 1px 2px 0; font-family: "DejaVu Sans Condensed", "DejaVu Sans", sans-serif; font-size: 12px; }
.start, .tasks button { height: 38px; border: 1px solid; border-color: #fff #404040 #404040 #fff; box-shadow: inset -1px -1px #848284; }
.start { width: 52px; gap: 0; font-size: 11px; font-weight: bold; }
.quick { display: flex; gap: 18px; margin-left: 17px; }
.tasks { display: flex; gap: 2px; margin-left: 10px; flex: 1; }
.tasks button { width: 48px; }
.tasks .pressed { background: #fff; border-color: #404040 #fff #fff #404040; box-shadow: inset 1px 1px #848284; }
.ftext { fill: #fff; font-size: 9px; font-weight: bold; text-anchor: middle; }
.lang { display: flex; align-items: center; font-size: 12px; }
.cell { display: flex; align-items: center; height: 24px; margin-left: 4px; padding-left: 5px; border-left: 1px solid #999; box-shadow: inset 1px 0 #fff; }
.cell.last { padding: 0 4px; }
.tray { display: flex; align-items: center; gap: 8px; height: 38px; padding: 0 0 0 7px; border: 1px solid; border-color: #848284 #fff #fff #848284; font-size: 11px; }
.clock { display: flex; flex-direction: column; text-align: center; line-height: 16px; margin: 0 0 0 2px; white-space: nowrap; }
.desk { margin-left: -2px; }
.vm { fill: #fff; font-size: 9px; font-weight: bold; text-anchor: middle; }
```
